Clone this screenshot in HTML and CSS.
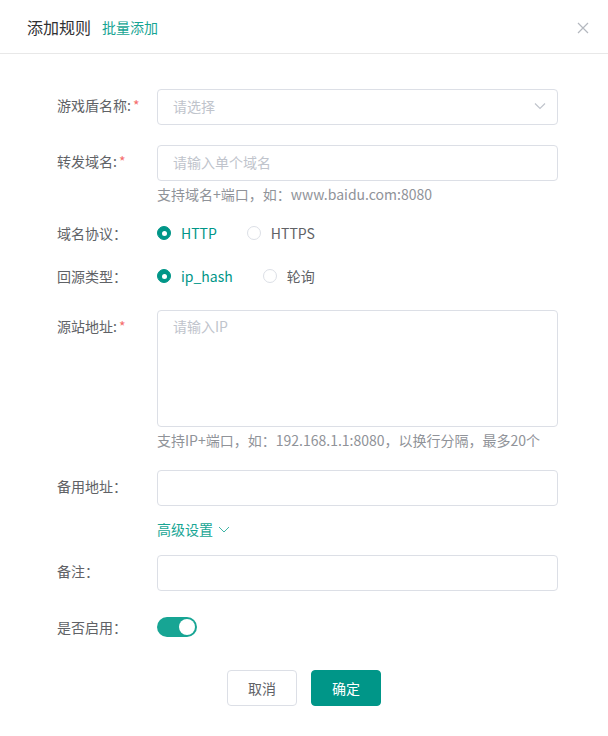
FILE: index.html
```html
<!DOCTYPE html>
<html lang="zh-CN">
  <head>
    <meta charset="UTF-8" />
    <meta name="viewport" content="width=device-width, initial-scale=1.0" />
    <title>添加规则</title>
    <link rel="stylesheet" href="styles.css">
  </head>
  <body>
    <div class="dialog">
      <div class="dialog-header">
        <span class="dialog-title">添加规则</span>
        <a class="batch-link">批量添加</a>
        <span class="close">
          <svg width="12" height="12" viewBox="0 0 12 12">
            <path d="M1 1L11 11M11 1L1 11" stroke="#b4b8bf" stroke-width="1.2" fill="none" />
          </svg>
        </span>
      </div>

      <div class="dialog-body">
        <div class="form-row">
          <label class="form-label">游戏盾名称:<span class="req">*</span></label>
          <div class="form-control">
            <div class="select">
              <span class="placeholder">请选择</span>
              <svg class="select-arrow" width="12" height="8" viewBox="0 0 12 8">
                <path d="M1 1.5L6 6.5L11 1.5" stroke="#c0c4cc" stroke-width="1.2" fill="none" />
              </svg>
            </div>
          </div>
        </div>

        <div class="form-row row-help">
          <label class="form-label">转发域名:<span class="req">*</span></label>
          <div class="form-control">
            <input class="input" type="text" placeholder="请输入单个域名" />
            <div class="help">支持域名+端口，如：www.baidu.com:8080</div>
          </div>
        </div>

        <div class="form-row radio-row">
          <label class="form-label">域名协议：</label>
          <div class="form-control radios">
            <span class="radio checked"><i></i>HTTP</span>
            <span class="radio"><i></i>HTTPS</span>
          </div>
        </div>

        <div class="form-row radio-row last-radio">
          <label class="form-label">回源类型：</label>
          <div class="form-control radios">
            <span class="radio checked"><i></i>ip_hash</span>
            <span class="radio"><i></i>轮询</span>
          </div>
        </div>

        <div class="form-row">
          <label class="form-label">源站地址:<span class="req">*</span></label>
          <div class="form-control">
            <textarea class="textarea" placeholder="请输入IP"></textarea>
            <div class="help">支持IP+端口，如：192.168.1.1:8080，以换行分隔，最多20个</div>
          </div>
        </div>

        <div class="form-row no-gap">
          <label class="form-label">备用地址：</label>
          <div class="form-control">
            <input class="input" type="text" />
          </div>
        </div>

        <div class="advanced">
          <a class="advanced-link">高级设置
            <svg width="12" height="7" viewBox="0 0 12 7">
              <path d="M1 1L6 6L11 1" stroke="#3fb5a6" stroke-width="1" fill="none" />
            </svg>
          </a>
        </div>

        <div class="form-row">
          <label class="form-label">备注：</label>
          <div class="form-control">
            <input class="input" type="text" />
          </div>
        </div>

        <div class="form-row">
          <label class="form-label">是否启用：</label>
          <div class="form-control">
            <span class="switch on"><i></i></span>
          </div>
        </div>
      </div>

      <div class="dialog-footer">
        <button type="button" class="btn">取消</button>
        <button type="button" class="btn btn-primary">确定</button>
      </div>
    </div>
  </body>
</html>
```

FILE: styles.css
```css
body {
  margin: 0;
  padding: 0;
  background-color: #ffffff;
  font-family: "Noto Sans CJK SC", "Noto Sans", sans-serif;
  font-size: 14px;
  color: #606266;
}
.dialog {
  width: 608px;
}
.dialog-header {
  height: 53px;
  display: flex;
  align-items: center;
  padding: 0 19px 0 27px;
  border-bottom: 1px solid #e8e8e8;
}
.dialog-title {
  font-size: 16px;
  color: #303133;
}
.batch-link {
  margin-left: 11px;
  font-size: 14px;
  color: #17a594;
}
.close {
  margin-left: auto;
  display: flex;
  margin-top: 2px;
}
.dialog-body {
  padding: 35px 50px 0 57px;
}
.form-row {
  display: flex;
  margin-bottom: 20px;
}
.form-row.row-help {
  margin-bottom: 17px;
}
.form-row.radio-row {
  margin-bottom: 19px;
}
.form-row.last-radio {
  margin-bottom: 22px;
}
.form-row.no-gap {
  margin-bottom: 0;
}
.form-label {
  width: 100px;
  flex-shrink: 0;
  line-height: 33px;
  color: #606266;
  white-space: nowrap;
}
.radio-row .form-label {
  line-height: 24px;
}
.req {
  color: #f56c6c;
  margin-left: 2px;
}
.form-control {
  flex: 1;
}
.input,
.select,
.textarea {
  box-sizing: border-box;
  width: 100%;
  height: 36px;
  border: 1px solid #dcdfe6;
  border-radius: 4px;
  padding: 0 15px;
  font-family: inherit;
  font-size: 14px;
  color: #606266;
  outline: none;
  display: block;
}
.input::placeholder,
.textarea::placeholder,
.placeholder {
  color: #c0c4cc;
}
.select {
  display: flex;
  align-items: center;
  justify-content: space-between;
  padding-right: 11px;
  padding-bottom: 2px;
}
.input {
  padding-bottom: 2px;
}
.textarea {
  height: 117px;
  padding: 4px 15px;
  resize: none;
  line-height: 22px;
}
.help {
  margin-top: 3px;
  line-height: 20px;
  color: #909399;
}
.radios {
  display: flex;
  align-items: center;
  height: 24px;
  gap: 30px;
}
.radio {
  display: flex;
  align-items: center;
  color: #606266;
}
.radio i {
  box-sizing: border-box;
  width: 14px;
  height: 14px;
  border: 1px solid #dcdfe6;
  border-radius: 50%;
  margin-right: 10px;
  position: relative;
}
.radio.checked {
  color: #009688;
}
.radio.checked i {
  background-color: #009688;
  border-color: #009688;
}
.radio.checked i::after {
  content: "";
  position: absolute;
  width: 5px;
  height: 5px;
  border-radius: 50%;
  background: #ffffff;
  left: 3.5px;
  top: 3.5px;
}
.advanced {
  padding-left: 100px;
  margin: 13px 0 16px;
  line-height: 20px;
}
.advanced-link {
  color: #17a594;
  display: inline-flex;
  align-items: center;
  gap: 5px;
}
.switch {
  display: inline-block;
  margin-top: 6px;
  width: 40px;
  height: 20px;
  border-radius: 10px;
  background-color: #17a594;
  position: relative;
}
.switch i {
  position: absolute;
  top: 2px;
  right: 2px;
  width: 16px;
  height: 16px;
  border-radius: 50%;
  background: #ffffff;
}
.dialog-footer {
  display: flex;
  justify-content: center;
  gap: 14px;
  padding-top: 6px;
}
.btn {
  width: 70px;
  height: 36px;
  border: 1px solid #dcdfe6;
  border-radius: 4px;
  background: #ffffff;
  color: #606266;
  font-family: inherit;
  font-size: 14px;
  padding: 0;
}
.btn-primary {
  background: #009688;
  border-color: #009688;
  color: #ffffff;
}
```
